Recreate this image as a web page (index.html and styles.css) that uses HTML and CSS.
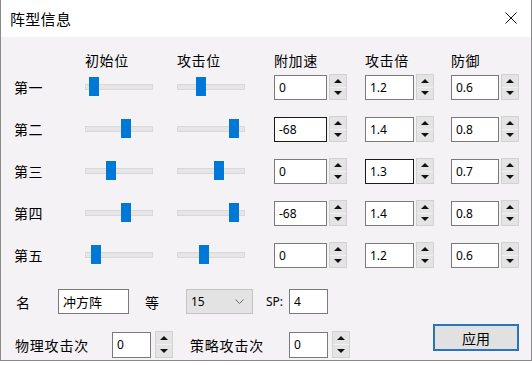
FILE: index.html
```html
<!DOCTYPE html>
<html lang="zh">
<head>
    <meta charset="UTF-8">
    <meta name="viewport" content="width=device-width, initial-scale=1.0">
    <title>阵型信息</title>
    <link rel="stylesheet" href="styles.css">
</head>
<body>
    <div class="window">
        <div class="titlebar">
            <span class="title">阵型信息</span>
            <span class="close">
                <svg width="12" height="12" viewBox="0 0 12 12"><path d="M0.5 0.5 L11.5 11.5 M11.5 0.5 L0.5 11.5" stroke="#111" stroke-width="1" fill="none"/></svg>
            </span>
        </div>
        <div class="content">
            <!-- Tabla de posiciones -->
            <div class="grid">
                <div></div>
                <div class="head">初始位</div>
                <div class="head">攻击位</div>
                <div class="head">附加速</div>
                <div class="head">攻击倍</div>
                <div class="head">防御</div>

                <div class="cell label">第一</div>
                <div class="cell"><div class="track"><span class="thumb" style="left: 3px"></span></div></div>
                <div class="cell"><div class="track"><span class="thumb" style="left: 18px"></span></div></div>
                <div class="cell spin"><input class="num w53" value="0"><div class="arrows"><span class="up"></span><span class="down"></span></div></div>
                <div class="cell spin"><input class="num w49" value="1.2"><div class="arrows"><span class="up"></span><span class="down"></span></div></div>
                <div class="cell spin"><input class="num w48" value="0.6"><div class="arrows"><span class="up"></span><span class="down"></span></div></div>

                <div class="cell label">第二</div>
                <div class="cell"><div class="track"><span class="thumb" style="left: 35px"></span></div></div>
                <div class="cell"><div class="track"><span class="thumb" style="left: 51px"></span></div></div>
                <div class="cell spin"><input class="num w53 dark" value="-68"><div class="arrows"><span class="up"></span><span class="down"></span></div></div>
                <div class="cell spin"><input class="num w49" value="1.4"><div class="arrows"><span class="up"></span><span class="down"></span></div></div>
                <div class="cell spin"><input class="num w48" value="0.8"><div class="arrows"><span class="up"></span><span class="down"></span></div></div>

                <div class="cell label">第三</div>
                <div class="cell"><div class="track"><span class="thumb" style="left: 20px"></span></div></div>
                <div class="cell"><div class="track"><span class="thumb" style="left: 36px"></span></div></div>
                <div class="cell spin"><input class="num w53" value="0"><div class="arrows"><span class="up"></span><span class="down"></span></div></div>
                <div class="cell spin"><input class="num w49 dark" value="1.3"><div class="arrows"><span class="up"></span><span class="down"></span></div></div>
                <div class="cell spin"><input class="num w48" value="0.7"><div class="arrows"><span class="up"></span><span class="down"></span></div></div>

                <div class="cell label">第四</div>
                <div class="cell"><div class="track"><span class="thumb" style="left: 35px"></span></div></div>
                <div class="cell"><div class="track"><span class="thumb" style="left: 51px"></span></div></div>
                <div class="cell spin"><input class="num w53" value="-68"><div class="arrows"><span class="up"></span><span class="down"></span></div></div>
                <div class="cell spin"><input class="num w49" value="1.4"><div class="arrows"><span class="up"></span><span class="down"></span></div></div>
                <div class="cell spin"><input class="num w48" value="0.8"><div class="arrows"><span class="up"></span><span class="down"></span></div></div>

                <div class="cell label">第五</div>
                <div class="cell"><div class="track"><span class="thumb" style="left: 5px"></span></div></div>
                <div class="cell"><div class="track"><span class="thumb" style="left: 21px"></span></div></div>
                <div class="cell spin"><input class="num w53" value="0"><div class="arrows"><span class="up"></span><span class="down"></span></div></div>
                <div class="cell spin"><input class="num w49" value="1.2"><div class="arrows"><span class="up"></span><span class="down"></span></div></div>
                <div class="cell spin"><input class="num w48" value="0.6"><div class="arrows"><span class="up"></span><span class="down"></span></div></div>
            </div>

            <!-- Nombre y nivel -->
            <div class="form-row">
                <span class="lbl-name">名</span>
                <input class="num w71" value="冲方阵">
                <span class="lbl-lv">等</span>
                <div class="select">
                    <span>15</span>
                    <svg width="9" height="5" viewBox="0 0 9 5"><path d="M0.5 0.5 L4.5 4.5 L8.5 0.5" stroke="#666" stroke-width="1" fill="none"/></svg>
                </div>
                <span class="lbl-sp">SP:</span>
                <input class="num w39" value="4">
            </div>

            <div class="form-row bottom">
                <span class="lbl-atk">物理攻击次</span>
                <input class="num w39 tall" value="0">
                <div class="arrows tall-arrows"><span class="up"></span><span class="down"></span></div>
                <span class="lbl-strat">策略攻击次</span>
                <input class="num w39 tall" value="0">
                <div class="arrows tall-arrows"><span class="up"></span><span class="down"></span></div>
                <button class="apply">应用</button>
            </div>
        </div>
    </div>
</body>
</html>
```

FILE: styles.css
```css
body { margin: 0; background: #fff; font-family: "Noto Sans CJK SC", sans-serif; color: #000; }
.window { width: 532px; height: 361px; box-sizing: border-box; border: 1px solid #8a8a8a; border-top: none; background: #f5f2f5; }
.titlebar { height: 37px; background: #fff; display: flex; align-items: center; justify-content: space-between; padding: 0 14px 0 9px; }
.title { font-size: 15px; letter-spacing: 0.3px; line-height: 20px; }
.close { display: flex; margin-top: -2px; }
.content { padding-top: 10px; }

.grid { display: grid; grid-template-columns: 72px 92px 97px 91px 86px 70px; grid-template-rows: 27px; grid-auto-rows: 42px; align-items: start; padding-left: 12px; }
.head { font-size: 14px; line-height: 27px; height: 27px; letter-spacing: 0.6px; }
.cell { height: 26px; display: flex; align-items: center; }
.label { font-size: 14px; letter-spacing: 0.6px; padding-left: 1px; }

.track { position: relative; width: 66px; height: 4px; background: #e6e6e6; border: 1px solid #d8d8d8; }
.thumb { position: absolute; top: -8px; width: 10px; height: 19px; background: #0078d7; }

.spin { gap: 2px; }
.num { box-sizing: border-box; height: 25px; border: 1px solid #7a7a7a; background: #fff; padding: 0 0 0 4px; margin: 0; font-family: "Noto Sans", "Noto Sans CJK SC", sans-serif; font-size: 12px; color: #000; outline: none; }
.num.dark { border-color: #1a1a1a; }
.w53 { width: 53px; }
.w49 { width: 49px; }
.w48 { width: 48px; }
.w71 { width: 71px; font-size: 13px; }
.w39 { width: 39px; }
.num.tall { height: 26px; }

.arrows { box-sizing: border-box; width: 18px; height: 26px; border: 1px solid #d2d2d2; background: #e4e4e4; display: flex; flex-direction: column; }
.arrows span { flex: 1; display: flex; align-items: center; justify-content: center; }
.arrows .up { border-bottom: 1px solid #f2f2f2; }
.arrows .up::after { content: ""; border-left: 4px solid transparent; border-right: 4px solid transparent; border-bottom: 4px solid #111; }
.arrows .down::after { content: ""; border-left: 4px solid transparent; border-right: 4px solid transparent; border-top: 4px solid #111; }
.tall-arrows { height: 27px; }

.form-row { display: flex; align-items: center; margin-top: 5px; padding-left: 15px; font-size: 14px; }
.lbl-name { width: 42px; }
.lbl-lv { width: 41px; margin-left: 16px; }
.select { box-sizing: border-box; width: 67px; height: 25px; background: #e3e3e3; border: 1px solid #c4c4c4; display: flex; align-items: center; justify-content: space-between; padding: 0 8px 0 4px; font-family: "Noto Sans", sans-serif; font-size: 12px; }
.lbl-sp { width: 23px; margin-left: 13px; font-family: "Noto Sans", sans-serif; font-size: 12px; }

.bottom { margin-top: 17px; padding-left: 14px; }
.lbl-atk { width: 97px; letter-spacing: 0.8px; }
.lbl-strat { width: 99px; margin-left: 17px; letter-spacing: 0.8px; }
.bottom .tall-arrows { margin-left: 4px; }
.apply { margin-left: auto; margin-right: 12px; align-self: flex-start; margin-top: -7px; width: 86px; height: 27px; box-sizing: border-box; border: 2px solid #2b74b8; background: #e1e1e1; font-family: "Noto Sans CJK SC", sans-serif; font-size: 14px; padding: 0; }
```
